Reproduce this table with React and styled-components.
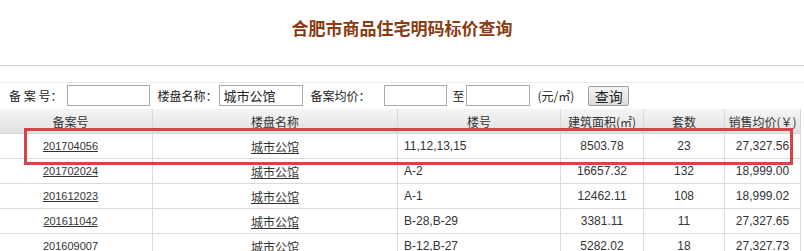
import React from "react";
import styled, { createGlobalStyle } from "styled-components";

const GlobalStyle = createGlobalStyle`
  body {
    margin: 0;
    overflow: hidden;
    background: #fff;
    font-family: "Liberation Sans", "Noto Sans CJK SC", sans-serif;
    font-size: 12px;
    color: #333;
  }
`;

const Page = styled.div`
  position: relative;
  width: 804px;
  height: 251px;
  overflow: hidden;
`;

const TitleBar = styled.div`
  height: 65px;
  border-bottom: 1px solid #cfcfcf;
  display: flex;
  justify-content: center;
  align-items: flex-start;
`;

const Title = styled.h1`
  margin: 16px 0 0;
  font-family: "Noto Sans CJK SC", sans-serif;
  font-size: 17px;
  line-height: 24px;
  font-weight: bold;
  color: #8a3b10;
`;

const SearchRow = styled.div`
  margin-top: 16px;
  height: 25px;
  border-top: 1px solid #ececec;
  display: flex;
  align-items: center;
  padding-left: 9px;
`;

const Label = styled.span`
  font-family: "Noto Sans CJK SC", sans-serif;
  font-size: 12px;
  color: #222;
  margin-left: ${(p) => p.$ml || 0}px;
  white-space: pre;
`;

const TextInput = styled.input`
  box-sizing: border-box;
  width: ${(p) => p.$w}px;
  height: 21px;
  margin-left: ${(p) => p.$ml || 0}px;
  border: 1px solid #a9a9a9;
  padding: 0 3px;
  font-family: "Noto Sans CJK SC", sans-serif;
  font-size: 13px;
  color: #222;
  outline: none;
  background: #fff;
`;

const QueryButton = styled.button`
  box-sizing: border-box;
  width: 41px;
  height: 20px;
  margin-left: 14px;
  padding: 0;
  border: 1px solid #a0a0a0;
  border-radius: 2px;
  background: linear-gradient(#f6f6f6, #dcdcdc);
  font-family: "Noto Sans CJK SC", sans-serif;
  font-size: 14px;
  line-height: 18px;
  color: #222;
`;

const Table = styled.table`
  margin-top: 1px;
  margin-left: -12px;
  width: 812px;
  table-layout: fixed;
  border-collapse: collapse;
`;

const HeadCell = styled.th`
  height: 24px;
  padding: 0;
  border: 1px solid #d8d8d8;
  border-top: none;
  background: linear-gradient(#f5f5f5, #e1e1e1);
  font-family: "Noto Sans CJK SC", sans-serif;
  font-size: 12px;
  font-weight: normal;
  color: #333;
  text-align: center;
  white-space: nowrap;
  overflow: hidden;
`;

const Cell = styled.td`
  height: 24px;
  padding: ${(p) => (p.$align === "left" ? "0 0 0 6px" : "0")};
  border: 1px solid #dadada;
  text-align: ${(p) => p.$align || "center"};
  white-space: nowrap;
  overflow: hidden;
  font-family: "Liberation Sans", "Noto Sans CJK SC", sans-serif;
  font-size: 12px;
  color: #333;
`;

const NumLink = styled.a`
  font-family: "Liberation Sans", sans-serif;
  font-size: 11px;
  color: #333;
  text-decoration: underline;
`;

const NameLink = styled.a`
  font-family: "Noto Sans CJK SC", sans-serif;
  font-size: 12px;
  color: #333;
  text-decoration: underline;
`;

const Highlight = styled.div`
  position: absolute;
  left: 24px;
  top: 128px;
  width: 769px;
  height: 37px;
  border: 3px solid #d8434a;
  box-sizing: border-box;
  pointer-events: none;
`;

const rows = [
  ["201704056", "城市公馆", "11,12,13,15", "8503.78", "23", "27,327.56"],
  ["201702024", "城市公馆", "A-2", "16657.32", "132", "18,999.00"],
  ["201612023", "城市公馆", "A-1", "12462.11", "108", "18,999.02"],
  ["201611042", "城市公馆", "B-28,B-29", "3381.11", "11", "27,327.65"],
  ["201609007", "城市公馆", "B-12,B-27", "5282.02", "18", "27,327.73"],
];

const widths = [164, 245, 163, 83, 81, 76];

export default function App() {
  return (
    <Page>
      <GlobalStyle />
      <TitleBar>
        <Title>合肥市商品住宅明码标价查询</Title>
      </TitleBar>
      <SearchRow>
        <Label>备 案 号：</Label>
        <TextInput $w={83} $ml={5} />
        <Label $ml={7}>楼盘名称：</Label>
        <TextInput $w={84} $ml={2} defaultValue="城市公馆" />
        <Label $ml={7}>备案均价：</Label>
        <TextInput $w={63} $ml={14} />
        <Label $ml={5}>至</Label>
        <TextInput $w={64} $ml={2} />
        <Label $ml={7}>(元/㎡)</Label>
        <QueryButton>查询</QueryButton>
      </SearchRow>
      <Table>
        <colgroup>
          {widths.map((w, i) => (
            <col key={i} style={{ width: w }} />
          ))}
        </colgroup>
        <thead>
          <tr>
            <HeadCell>备案号</HeadCell>
            <HeadCell>楼盘名称</HeadCell>
            <HeadCell>楼号</HeadCell>
            <HeadCell>建筑面积(㎡)</HeadCell>
            <HeadCell>套数</HeadCell>
            <HeadCell>销售均价(￥)</HeadCell>
          </tr>
        </thead>
        <tbody>
          {rows.map((r) => (
            <tr key={r[0]}>
              <Cell>
                <NumLink href="#">{r[0]}</NumLink>
              </Cell>
              <Cell>
                <NameLink href="#">{r[1]}</NameLink>
              </Cell>
              <Cell $align="left">{r[2]}</Cell>
              <Cell>{r[3]}</Cell>
              <Cell>{r[4]}</Cell>
              <Cell>{r[5]}</Cell>
            </tr>
          ))}
        </tbody>
      </Table>
      <Highlight />
    </Page>
  );
}
